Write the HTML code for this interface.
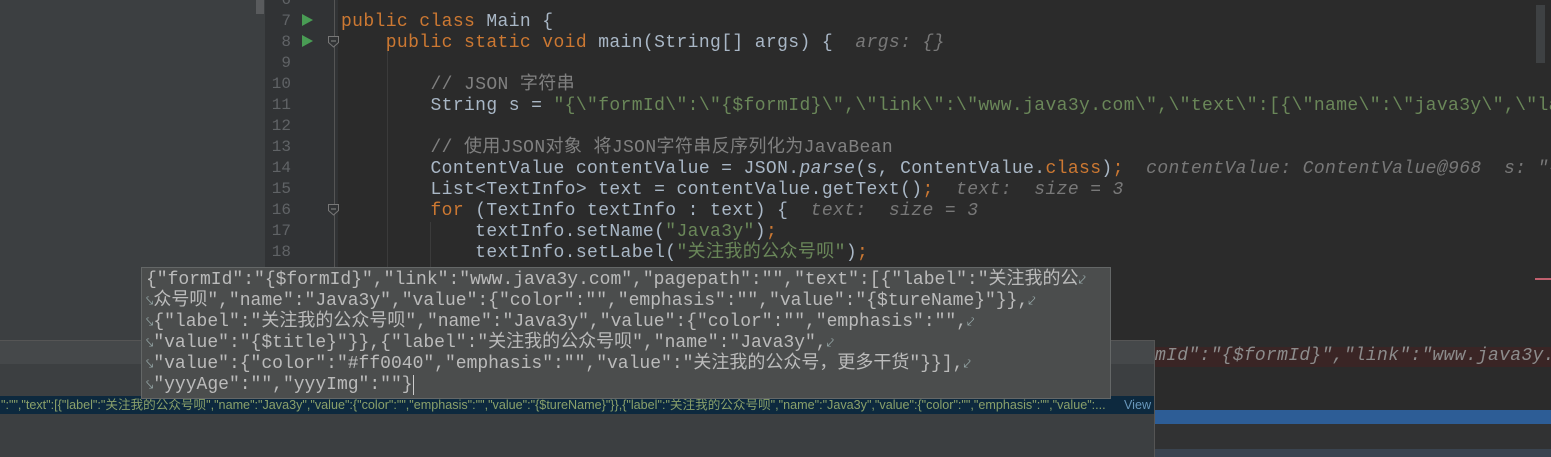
<!DOCTYPE html>
<html><head><meta charset="utf-8"><style>
*{margin:0;padding:0;box-sizing:border-box}
body{width:1551px;height:457px;overflow:hidden;background:#2b2b2b;position:relative;font-family:"Liberation Mono","Noto Sans CJK SC",monospace;}
.abs{position:absolute}
.code{position:absolute;left:341px;top:-9px;font-size:18px;letter-spacing:0.38px;line-height:21px;color:#a9b7c6;white-space:pre}
.k{color:#cc7832}.s{color:#6a8759}.c{color:#808080}.h{color:#787878;font-style:italic}.i{font-style:italic}
.ln{position:absolute;left:265px;width:26px;text-align:right;font-size:16px;line-height:21px;color:#606366;top:-10px;white-space:pre}
.pop{position:absolute;left:141px;top:267px;width:970px;height:132px;background:#4b4d4d;border:1px solid #646767;font-size:18px;line-height:21px;color:#bbbbbb;white-space:pre;padding:2px 0 0 4px}
.ar{color:#9aa;font-size:13px}
</style></head><body>
<div class="abs" style="left:0;top:0;width:265px;height:340px;background:#3c3f41"></div>
<div class="abs" style="left:256px;top:0;width:8px;height:14px;background:#595b5d"></div>
<div class="abs" style="left:265px;top:0;width:73px;height:340px;background:#313335"></div>
<div class="abs" style="left:334px;top:0;width:1px;height:340px;background:#555"></div>
<div class="abs" style="left:387px;top:50px;width:1px;height:290px;background:#3b3b3b"></div>
<div class="abs" style="left:430px;top:222px;width:1px;height:50px;background:#3b3b3b"></div>
<div class="ln">6
7
8
9
10
11
12
13
14
15
16
17
18</div>
<svg class="abs" style="left:300px;top:13px" width="14" height="40"><path d="M2 1 L13 7 L2 13Z" fill="#499c54"/><path d="M2 22 L13 28 L2 34Z" fill="#499c54"/></svg>
<svg class="abs" style="left:327px;top:35px" width="14" height="16"><path d="M1.5 1.5H11.5V7.5L6.5 12L1.5 7.5Z" fill="#313335" stroke="#777"/><path d="M4 6H9" stroke="#888"/></svg>
<svg class="abs" style="left:327px;top:203px" width="14" height="16"><path d="M1.5 1.5H11.5V7.5L6.5 12L1.5 7.5Z" fill="#313335" stroke="#777"/><path d="M4 6H9" stroke="#888"/></svg>
<div class="code"><span> </span>
<span class="k">public class</span> Main {
    <span class="k">public static void</span> main(String[] args) {  <span class="h">args: {}</span>

        <span class="c">// JSON 字符串</span>
        String s = <span class="s">"{\"formId\":\"{$formId}\",\"link\":\"www.java3y.com\",\"text\":[{\"name\":\"java3y\",\"lab</span>

        <span class="c">// 使用JSON对象 将JSON字符串反序列化为JavaBean</span>
        ContentValue contentValue = JSON.<span class="i">parse</span>(s, ContentValue.<span class="k">class</span>)<span class="k">;</span>  <span class="h">contentValue: ContentValue@968  s: "{"</span>
        List&lt;TextInfo&gt; text = contentValue.getText()<span class="k">;</span>  <span class="h">text:  size = 3</span>
        <span class="k">for</span> (TextInfo textInfo : text) {  <span class="h">text:  size = 3</span>
            textInfo.setName(<span class="s">"Java3y"</span>)<span class="k">;</span>
            textInfo.setLabel(<span class="s">"关注我的公众号呗"</span>)<span class="k">;</span></div>
<div class="abs" style="left:1536px;top:5px;width:9px;height:58px;background:#3e4143"></div>
<div class="abs" style="left:1535px;top:278px;width:16px;height:2px;background:#c0606e"></div>
<div class="abs" style="left:1155px;top:347px;width:396px;height:20px;background:#3a2525"></div>
<div class="abs" style="left:1155px;top:346px;font-size:18px;letter-spacing:0.3px;line-height:20px;color:#8c8c8c;font-style:italic;white-space:pre">mId":"{$formId}","link":"www.java3y.</div>
<div class="abs" style="left:1155px;top:410px;width:396px;height:14px;background:#2d5d96"></div>
<div class="abs" style="left:1155px;top:424px;width:396px;height:25px;background:#313233"></div>
<div class="abs" style="left:1155px;top:449px;width:396px;height:8px;background:#3a4450"></div>
<div class="abs" style="left:0;top:340px;width:1155px;height:117px;background:#3c3f41;border-right:1px solid #555;border-top:1px solid #555"></div>
<div class="abs" style="left:0;top:341px;width:1154px;height:23px;background:#45484a"></div>
<div class="abs" style="left:0;top:396px;width:1154px;height:18px;background:#0d293e;font-family:'Liberation Sans','Noto Sans CJK SC',sans-serif;font-size:12.6px;line-height:18px;color:#8aa06a;white-space:nowrap;overflow:hidden;padding-left:1px"><span style="display:inline-block;width:1120px;overflow:hidden;vertical-align:top">":"","text":[{"label":"关注我的公众号呗","name":"Java3y","value":{"color":"","emphasis":"","value":"{$tureName}"}},{"label":"关注我的公众号呗","name":"Java3y","value":{"color":"","emphasis":"","value":...</span><span style="color:#6897bb;position:absolute;left:1124px">View</span></div>
<div class="pop">{"formId":"{$formId}","link":"www.java3y.com","pagepath":"","text":[{"label":"关注我的公<span class="ar">⤦</span>
<span class="ar">⤥</span>众号呗","name":"Java3y","value":{"color":"","emphasis":"","value":"{$tureName}"}},<span class="ar">⤦</span>
<span class="ar">⤥</span>{"label":"关注我的公众号呗","name":"Java3y","value":{"color":"","emphasis":"",<span class="ar">⤦</span>
<span class="ar">⤥</span>"value":"{$title}"}},{"label":"关注我的公众号呗","name":"Java3y",<span class="ar">⤦</span>
<span class="ar">⤥</span>"value":{"color":"#ff0040","emphasis":"","value":"关注我的公众号，更多干货"}}],<span class="ar">⤦</span>
<span class="ar">⤥</span>"yyyAge":"","yyyImg":""}<span style="border-left:1px solid #ccc"></span></div>
</body></html>
